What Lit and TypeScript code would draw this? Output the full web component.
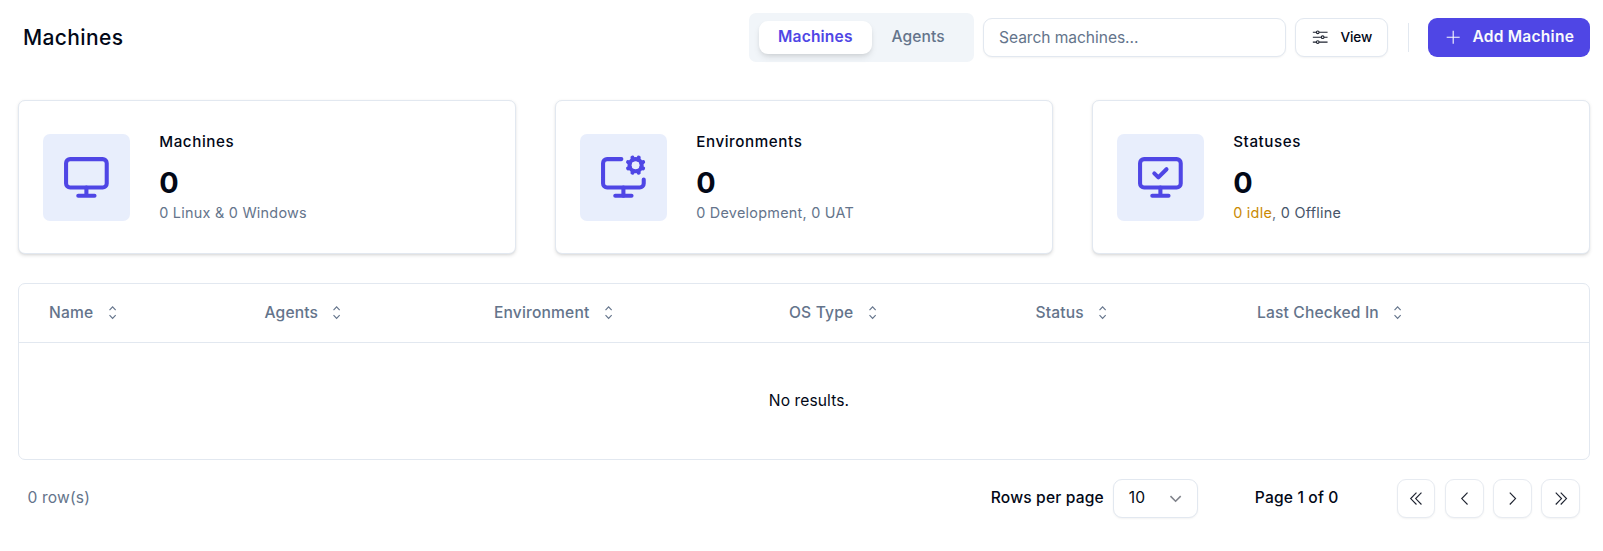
import { LitElement, html, css, svg, nothing } from "lit";
import { customElement, property } from "lit/decorators.js";

const monitor = svg`<rect width="20" height="14" x="2" y="3" rx="2"/><path d="M8 21h8M12 17v4"/>`;
const monitorCheck = svg`<path d="m9 10 2 2 4-4"/><rect width="20" height="14" x="2" y="3" rx="2"/><path d="M12 17v4M8 21h8"/>`;
const monitorCog = svg`<path d="M12 17v4"/><path d="m14.305 7.53.923-.382m0-2.296-.923-.383m2.547-1.241-.383-.924m.383 6.468-.383.923m2.679-6.467.383-.924m-.001 7.392-.382-.924m1.624-3.92.924-.383m-.924 2.679.924.383"/><path d="M22 13v2a2 2 0 0 1-2 2H4a2 2 0 0 1-2-2V5a2 2 0 0 1 2-2h7"/><path d="M8 21h8"/><circle cx="18" cy="6" r="3"/>`;

const glyphs: Record<string, unknown> = {
  sort: svg`<path d="M5.1 5.5 7.5 3 9.9 5.5M5.1 9.5 7.5 12 9.9 9.5"/>`,
  mixer: svg`<path d="M1.5 3.5h2.9M6.6 3.5h6.9M1.5 7.5h6.9M10.6 7.5h2.9M1.5 11.5h2.9M6.6 11.5h6.9"/><circle cx="5.5" cy="3.5" r="1.1"/><circle cx="9.5" cy="7.5" r="1.1"/><circle cx="5.5" cy="11.5" r="1.1"/>`,
  plus: svg`<path d="M7.5 2.2v10.6M2.2 7.5h10.6"/>`,
  first: svg`<path d="M7.4 2.9 2.9 7.5l4.5 4.6M11.3 2.9 6.8 7.5l4.5 4.6"/>`,
  prev: svg`<path d="M9.8 2.9 5.3 7.5l4.5 4.6"/>`,
  next: svg`<path d="m5.3 2.9 4.5 4.6-4.5 4.6"/>`,
  last: svg`<path d="m3.7 2.9 4.5 4.6-4.5 4.6M7.6 2.9l4.5 4.6-4.5 4.6"/>`,
  down: svg`<path d="M3.5 5.6l4 4 4-4"/>`,
};

const glyph = (name: string) =>
  html`<svg class="glyph ${name}" viewBox="0 0 15 15" fill="none" stroke="currentColor">${glyphs[name]}</svg>`;

@customElement("stat-card")
class StatCard extends LitElement {
  @property() label = "";
  @property() value = "0";
  @property({ attribute: false }) icon: unknown = nothing;

  static styles = css`
    :host {
      display: flex;
      box-sizing: border-box;
      height: 154px;
      padding: 33px 24px;
      gap: 29.2px;
      border: 1px solid #e2e8f0;
      border-radius: 7px;
      background: #fff;
      box-shadow: 0 1.2px 3.6px rgb(0 0 0 / 0.1), 0 1.2px 2.4px -1.2px rgb(0 0 0 / 0.1);
    }
    .tile {
      display: grid;
      place-items: center;
      flex: none;
      width: 87px;
      height: 87px;
      border-radius: 7px;
      background: #e8eefc;
      color: #4f46e5;
    }
    .tile svg { width: 48.8px; height: 48.8px; }
    .label { font-size: 15.2px; font-weight: 500; line-height: 16px; letter-spacing: 0.58px; }
    .value { margin-top: 15px; font-size: 28.8px; font-weight: 700; line-height: 35px; }
    .note { margin-top: 3px; font-size: 14.4px; line-height: 20px; letter-spacing: 0.26px; color: #64748b; }
  `;

  render() {
    return html`
      <div class="tile">
        <svg viewBox="0 0 24 24" fill="none" stroke="currentColor" stroke-width="2" stroke-linecap="round" stroke-linejoin="round">${this.icon}</svg>
      </div>
      <div>
        <div class="label">${this.label}</div>
        <div class="value">${this.value}</div>
        <div class="note"><slot></slot></div>
      </div>`;
  }
}

@customElement("app-root")
class AppRoot extends LitElement {
  static styles = css`
    :host {
      display: block;
      box-sizing: border-box;
      min-height: 551px;
      padding: 13px 13px 0 18px;
      background: #fff;
      color: #020817;
      font-family: Inter, sans-serif;
      font-size: 15.6px;
      letter-spacing: 0.16px;
    }
    * { box-sizing: border-box; }
    .glyph { flex: none; width: 19.2px; height: 19.2px; stroke-width: 0.9; }

    header { display: flex; align-items: center; height: 49px; }
    h1 { margin: 0 auto 0 5px; font-size: 21px; font-weight: 500; line-height: 28px; letter-spacing: 0.38px; }
    .tabs {
      display: flex;
      align-items: flex-start;
      width: 225px;
      height: 49px;
      padding: 8px 10px;
      border-radius: 7px;
      background: #f1f5f9;
      color: #64748b;
    }
    .tab { padding: 0 19px 0 19.4px; height: 33px; border-radius: 9px; font-weight: 500; line-height: 31px; letter-spacing: 0.1px; }
    .tab.active {
      width: 113px;
      background: #fff;
      color: #4f46e5;
      padding-left: 19px;
      font-weight: 600;
      letter-spacing: 0.16px;
      box-shadow: 0 4px 7px -1px rgb(0 0 0 / 0.1), 0 2px 5px -2px rgb(0 0 0 / 0.1);
    }
    .field, .outline {
      height: 39px;
      border: 1px solid #e2e8f0;
      border-radius: 9px;
      background: #fff;
      box-shadow: 0 1px 2px rgb(0 0 0 / 0.05);
    }
    .field { width: 303px; margin-left: 9px; padding: 0 15px; font: 400 15.6px/37px Inter, sans-serif; letter-spacing: -0.06px; color: #020817; outline: none; }
    .field::placeholder { color: #64748b; opacity: 1; }
    .view { display: flex; align-items: center; gap: 11px; width: 93px; margin-left: 9px; padding: 0 0 0 15px; font-size: 13.6px; font-weight: 500; letter-spacing: -0.1px; }
    .view span { padding-bottom: 1px; }
    .view .glyph { width: 18.4px; height: 18.4px; color: #1e2330; }
    .divider { width: 1px; height: 29px; margin: 0 19px 0 20px; background: #e2e8f0; }
    .add { display: flex; align-items: center; gap: 10px; width: 162px; height: 39px; padding: 0 0 0 16px; border-radius: 9px; background: #4f46e5; color: #f8fafc; font-weight: 600; letter-spacing: 0.22px; white-space: nowrap; }
    .add .glyph { width: 18.4px; height: 18.4px; }
    .add span { padding-bottom: 2px; }

    .cards { display: grid; grid-template-columns: repeat(3, 1fr); gap: 39px; margin-top: 38px; }
    .idle { color: #ca8a04; }
    .offline { color: #475569; }

    .table { margin-top: 29px; height: 177px; border: 1px solid #e2e8f0; border-radius: 7px; }
    .head { display: grid; grid-template-columns: 215.5px 229.5px 295px 246.5px 221.5px 1fr; height: 59px; padding: 0 0 1.5px 30px; border-bottom: 1px solid #e2e8f0; align-items: center; color: #64748b; font-weight: 500; }
    .th { display: flex; align-items: center; gap: 9.3px; white-space: nowrap; }
    .empty { height: 114px; display: grid; place-items: center; padding-left: 10px; letter-spacing: 0.1px; }

    footer { display: flex; align-items: center; height: 39px; margin-top: 19px; padding: 0 10px 0 9.5px; font-weight: 500; }
    footer > span, .select span { padding-bottom: 1.5px; }
    .count { margin-right: auto; color: #64748b; font-weight: 400; }
    .select { display: flex; align-items: center; justify-content: space-between; width: 85px; margin-left: 9px; padding: 0 12px 0 15px; font-weight: 400; letter-spacing: 0; }
    .select .glyph { opacity: 0.5; stroke-width: 1.2; }
    .page { width: 199px; padding-left: 57px; white-space: nowrap; }
    .pager { display: flex; gap: 9.6px; }
    .pager .outline { display: grid; place-items: center; width: 38.6px; color: #1e2330; border-color: #e7ebf1; }
  `;

  private columns = ["Name", "Agents", "Environment", "OS Type", "Status", "Last Checked In"];

  render() {
    return html`
      <header>
        <h1>Machines</h1>
        <div class="tabs"><div class="tab active">Machines</div><div class="tab">Agents</div></div>
        <input class="field" placeholder="Search machines..." />
        <div class="outline view">${glyph("mixer")}<span>View</span></div>
        <div class="divider"></div>
        <div class="add">${glyph("plus")}<span>Add Machine</span></div>
      </header>
      <section class="cards">
        <stat-card label="Machines" .icon=${monitor}>0 Linux &amp; 0 Windows</stat-card>
        <stat-card label="Environments" .icon=${monitorCog}>0 Development, 0 UAT</stat-card>
        <stat-card label="Statuses" .icon=${monitorCheck}><span class="idle">0 idle</span>, <span class="offline">0 Offline</span></stat-card>
      </section>
      <section class="table">
        <div class="head">${this.columns.map((c) => html`<div class="th">${c}${glyph("sort")}</div>`)}</div>
        <div class="empty">No results.</div>
      </section>
      <footer>
        <span class="count">0 row(s)</span>
        <span>Rows per page</span>
        <div class="outline select"><span>10</span>${glyph("down")}</div>
        <span class="page">Page 1 of 0</span>
        <div class="pager">${["first", "prev", "next", "last"].map((n) => html`<div class="outline">${glyph(n)}</div>`)}</div>
      </footer>`;
  }
}
